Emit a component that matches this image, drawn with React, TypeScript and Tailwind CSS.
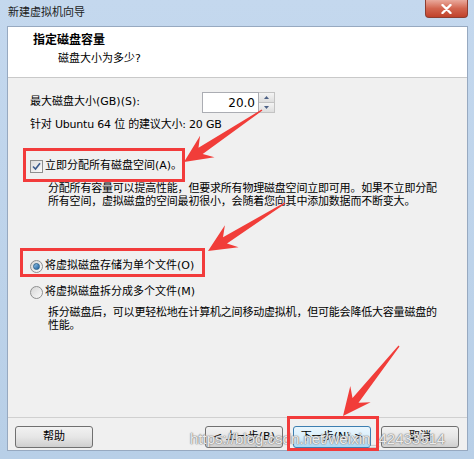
const font = 'font-["DejaVu_Sans","Noto_Sans_CJK_SC",sans-serif]';

// red annotation arrow, tail -> tip
function arrowPoints(tx: number, ty: number, px: number, py: number) {
  const dx = px - tx;
  const dy = py - ty;
  const len = Math.hypot(dx, dy);
  const ux = dx / len;
  const uy = dy / len;
  const nx = -uy;
  const ny = ux;
  const headLen = 28;
  const neck = 20;
  const headW = 13;
  const shaftW = 3.8;
  const tailW = 0.7;
  const pts = [
    [tx + nx * tailW, ty + ny * tailW],
    [px - ux * neck + nx * shaftW, py - uy * neck + ny * shaftW],
    [px - ux * headLen + nx * headW, py - uy * headLen + ny * headW],
    [px, py],
    [px - ux * headLen - nx * headW, py - uy * headLen - ny * headW],
    [px - ux * neck - nx * shaftW, py - uy * neck - ny * shaftW],
    [tx - nx * tailW, ty - ny * tailW],
  ];
  return pts.map((p) => p.map((v) => v.toFixed(1)).join(',')).join(' ');
}

const Checkbox = () => (
  <span className="w-[13px] h-[13px] border border-[#8e8f8f] bg-gradient-to-br from-[#dcdcdc] to-[#fbfbfb] flex items-center justify-center shrink-0">
    <svg width="9" height="9" viewBox="0 0 9 9">
      <path d="M1 4.5 L3.5 7 L8 1.2" fill="none" stroke="#3a5a8c" strokeWidth="1.6" />
    </svg>
  </span>
);

const Radio = ({ checked }: { checked?: boolean }) => (
  <span className="w-[13px] h-[13px] rounded-full border border-[#8e8f8f] bg-gradient-to-br from-[#d6d6d6] to-[#fafafa] flex items-center justify-center shrink-0">
    {checked && (
      <span className="w-[7px] h-[7px] rounded-full bg-gradient-to-br from-[#8fc4ea] to-[#1d5f9e] border border-[#2c628b]" />
    )}
  </span>
);

const Button = ({ label, primary }: { label: string; primary?: boolean }) => (
  <div
    className={`w-[78px] h-[22px] rounded-[3px] border flex items-center justify-center text-[11px] text-black ${
      primary
        ? 'border-[#3c7fb1] bg-gradient-to-b from-[#eaf6fd] via-[#d9f0fc] to-[#a7d9f5]'
        : 'border-[#707070] bg-gradient-to-b from-[#f2f2f2] via-[#e6e6e6] to-[#cfcfcf]'
    }`}
  >
    {label}
  </div>
);

export default function App() {
  return (
    <div className={`relative w-[474px] h-[459px] overflow-hidden bg-gradient-to-b from-[#c4d8ee] to-[#b8cfe7] ${font}`}>
      {/* title bar */}
      <div className="h-[26px] flex items-center pl-[8px] text-[11px] text-[#1b1b1b]">新建虚拟机向导</div>
      <div className="absolute right-[6px] top-0 w-[43px] h-[18px] rounded-b-[4px] border border-t-0 border-[#8d3d30] bg-gradient-to-b from-[#e9a99c] via-[#d2654f] to-[#c0412a] flex items-center justify-center">
        <svg width="11" height="10" viewBox="0 0 11 10">
          <path d="M1.5 1 L9.5 9 M9.5 1 L1.5 9" stroke="#ffffff" strokeWidth="2.4" strokeLinecap="round" />
        </svg>
      </div>

      {/* client area */}
      <div className="ml-[7px] mr-[6px] h-[425px] border border-[#97a9c0] flex flex-col">
        <div className="h-[51px] bg-white border-b border-[#c9c9c9] text-black">
          <div className="pl-[25px] pt-[6px] text-[12px] font-bold leading-[14px]">指定磁盘容量</div>
          <div className="pl-[50px] pt-[5px] text-[11px] leading-[14px]">磁盘大小为多少?</div>
        </div>

        <div className="flex-1 bg-[#f0f0f0] flex flex-col text-[11px] text-black">
          <div className="pl-[22px] flex flex-col">
            <div className="mt-[14px] h-[21px] flex items-center">
              <span className="w-[172px]">最大磁盘大小(GB)(S):</span>
              <div className="flex h-[21px]">
                <div className="w-[57px] bg-white border border-[#abadb3] flex items-center justify-end pr-[3px] text-[12px]">20.0</div>
                <div className="w-[16px] flex flex-col border border-l-0 border-[#c3c3c3]">
                  <div className="flex-1 bg-gradient-to-b from-[#f4f4f4] to-[#dedede] border-b border-[#c3c3c3] flex items-center justify-center">
                    <svg width="5" height="3" viewBox="0 0 5 3"><path d="M0 3 L2.5 0 L5 3Z" fill="#4d6185" /></svg>
                  </div>
                  <div className="flex-1 bg-gradient-to-b from-[#f4f4f4] to-[#dedede] flex items-center justify-center">
                    <svg width="5" height="3" viewBox="0 0 5 3"><path d="M0 0 L2.5 3 L5 0Z" fill="#4d6185" /></svg>
                  </div>
                </div>
              </div>
            </div>

            <div className="mt-[5px] leading-[14px] tracking-[-0.2px]">针对 Ubuntu 64 位 的建议大小: 20 GB</div>

            <div className="mt-[26px] h-[16px] flex items-center gap-[2px]">
              <Checkbox />
              <span>立即分配所有磁盘空间(A)。</span>
            </div>
            <div className="mt-[8px] pl-[18px] leading-[13px] whitespace-nowrap tracking-[-0.2px]">
              分配所有容量可以提高性能，但要求所有物理磁盘空间立即可用。如果不立即分配
              <br />
              所有空间，虚拟磁盘的空间最初很小，会随着您向其中添加数据而不断变大。
            </div>

            <div className="mt-[50px] h-[16px] flex items-center gap-[2px]">
              <Radio checked />
              <span>将虚拟磁盘存储为单个文件(O)</span>
            </div>
            <div className="mt-[10px] h-[16px] flex items-center gap-[2px]">
              <Radio />
              <span>将虚拟磁盘拆分成多个文件(M)</span>
            </div>
            <div className="mt-[6px] pl-[18px] leading-[13px] whitespace-nowrap tracking-[-0.2px]">
              拆分磁盘后，可以更轻松地在计算机之间移动虚拟机，但可能会降低大容量磁盘的
              <br />
              性能。
            </div>
          </div>

          <div className="mt-auto border-t border-[#d0d0d0] h-[33px] flex items-start pt-[8px] pl-[7px] pr-[8px]">
            <Button label="帮助" />
            <div className="ml-auto flex gap-[10px]">
              <Button label="< 上一步(B)" />
              <Button label="下一步(N) >" primary />
              <Button label="取消" />
            </div>
          </div>
        </div>
      </div>

      {/* watermark */}
      <div className="absolute left-[190px] top-[428px] text-[15px] font-['Liberation_Sans',sans-serif] text-white/85 [text-shadow:0_0_1px_#7a7a7a,0_0_1px_#7a7a7a,0_0_2px_#9a9a9a] whitespace-nowrap">
        https://blog.csdn.net/weixin_42433514
      </div>

      {/* annotations */}
      <div className="absolute left-[23px] top-[148px] w-[162px] h-[34px] border-[3px] border-[#f23b3b]" />
      <div className="absolute left-[20px] top-[248px] w-[185px] h-[29px] border-[3px] border-[#f23b3b]" />
      <div className="absolute left-[287px] top-[416px] w-[92px] h-[35px] border-[3px] border-[#f23b3b]" />
      <svg className="absolute left-0 top-0" width="474" height="459" viewBox="0 0 474 459">
        <polygon points={arrowPoints(262, 110, 184, 162)} fill="#f13d39" />
        <polygon points={arrowPoints(285, 203, 208, 251)} fill="#f13d39" />
        <polygon points={arrowPoints(399, 346, 343, 416)} fill="#f13d39" />
      </svg>
    </div>
  );
}
